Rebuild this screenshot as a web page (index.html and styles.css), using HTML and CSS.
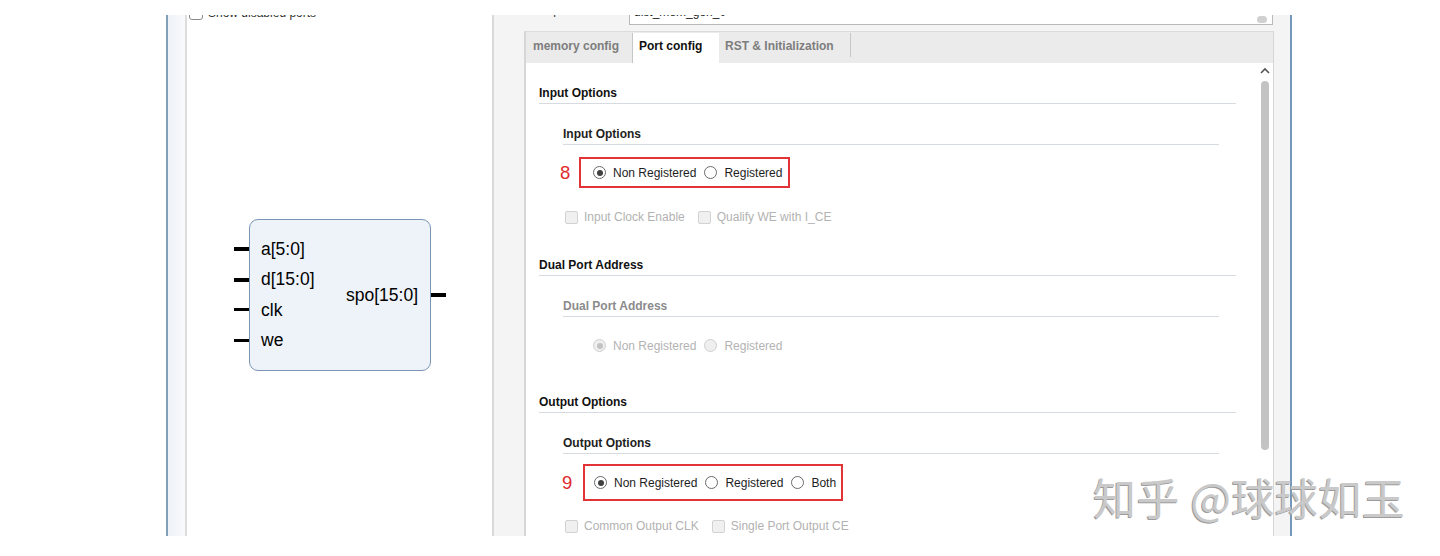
FILE: index.html
```html
<!DOCTYPE html>
<html lang="en">
<head>
<meta charset="utf-8">
<title>Port config</title>
<link rel="stylesheet" href="styles.css">
</head>
<body>
<div class="page">
  <div class="window">
    <div class="strip"></div>
    <div class="left-panel">
      <div class="show-ports"><span class="cb"></span><span class="show-text">Show disabled ports</span></div>
      <div class="symbol">
        <div class="pins-in">
          <div class="pin-row"><span class="pin bus"></span></div>
          <div class="pin-row"><span class="pin bus"></span></div>
          <div class="pin-row"><span class="pin"></span></div>
          <div class="pin-row"><span class="pin"></span></div>
        </div>
        <div class="block">
          <div class="labels-in">
            <div class="port">a[5:0]</div>
            <div class="port">d[15:0]</div>
            <div class="port">clk</div>
            <div class="port">we</div>
          </div>
          <div class="label-out">spo[15:0]</div>
        </div>
        <div class="pins-out"><span class="pin bus"></span></div>
      </div>
    </div>
    <div class="right-pane">
      <div class="name-row">
        <span class="name-label">Component Name</span>
        <div class="combo"><span class="combo-text">dist_mem_gen_0</span><span class="combo-btn"></span></div>
      </div>
      <div class="tabs">
        <div class="tab-bar">
          <div class="tab t1">memory config</div>
          <div class="tab active">Port config</div>
          <div class="tab t3">RST &amp; Initialization</div>
        </div>
        <div class="tab-body">
          <div class="scroll-content">
            <div class="h1 m-a">Input Options</div>
            <div class="group">
              <div class="h2 m-b">Input Options</div>
              <div class="opt-row r8">
                <span class="anno a8">8</span>
                <div class="redbox b8">
                  <span class="radio"><span class="circle on"></span>Non Registered</span>
                  <span class="radio"><span class="circle"></span>Registered</span>
                </div>
              </div>
              <div class="check-row c1">
                <span class="check"><span class="box"></span>Input Clock Enable</span>
                <span class="check"><span class="box"></span>Qualify WE with I_CE</span>
              </div>
            </div>

            <div class="h1 m-c">Dual Port Address</div>
            <div class="group">
              <div class="h2 dim m-b">Dual Port Address</div>
              <div class="radio-row disabled">
                <span class="radio"><span class="circle on"></span>Non Registered</span>
                <span class="radio"><span class="circle"></span>Registered</span>
              </div>
            </div>

            <div class="h1 m-d">Output Options</div>
            <div class="group">
              <div class="h2 m-b">Output Options</div>
              <div class="opt-row r9">
                <span class="anno a9">9</span>
                <div class="redbox b9">
                  <span class="radio"><span class="circle on"></span>Non Registered</span>
                  <span class="radio"><span class="circle"></span>Registered</span>
                  <span class="radio"><span class="circle"></span>Both</span>
                </div>
              </div>
              <div class="check-row c2">
                <span class="check"><span class="box"></span>Common Output CLK</span>
                <span class="check"><span class="box"></span>Single Port Output CE</span>
              </div>
            </div>
          </div>
          <div class="scrollbar">
            <svg class="arrow" width="10" height="7" viewBox="0 0 10 7"><path d="M1 6 L5 2 L9 6" fill="none" stroke="#555" stroke-width="1.6"/></svg>
            <div class="thumb"></div>
          </div>
        </div>
      </div>
    </div>
  </div>
  <div class="watermark">知乎 @球球如玉</div>
</div>
</body>
</html>
```

FILE: styles.css
```css
* { box-sizing: border-box; }
html, body { margin: 0; padding: 0; background: #fff; }
body { font-family: "Liberation Sans", Arial, sans-serif; font-size: 12px; color: #1a1a1a; }

.page {
  position: relative;
  width: 1440px;
  height: 556px;
  padding-top: 15px;
  overflow: hidden;
}

.window {
  margin-left: 166px;
  width: 1126px;
  height: 521px;
  display: flex;
  overflow: hidden;
  border-left: 2px solid #7f9fbb;
  border-right: 2px solid #7598ba;
}

.strip {
  width: 17px;
  flex: none;
  background: linear-gradient(to right, #eef3f8, #f8fafc);
}

.left-panel {
  width: 309px;
  flex: none;
  background: #fff;
  border-left: 2px solid #dddddd;
  border-right: 2px solid #d9d9d9;
}

.show-ports {
  display: flex;
  align-items: center;
  height: 14px;
  margin-top: -9px;
  margin-left: 2px;
}
.show-ports .cb {
  width: 14px;
  height: 14px;
  border: 1px solid #8a8a8a;
  border-radius: 3px;
  background: #fff;
}
.show-text { margin-left: 5px; color: #333; line-height: 14px; }

.symbol {
  display: flex;
  margin-top: 199px;
  margin-left: 47px;
}
.pins-in { width: 15px; padding-top: 15px; }
.pin-row { height: 30.4px; display: flex; align-items: center; }
.pin { display: block; width: 15px; height: 3px; background: #000; }
.pin.bus { height: 4px; }

.block {
  width: 182px;
  height: 152px;
  border: 1px solid #7a95b4;
  border-radius: 9px;
  background: #eef3f9;
  display: flex;
  justify-content: space-between;
}
.labels-in { padding-top: 14px; padding-left: 11px; }
.port, .label-out {
  font-size: 17.5px;
  color: #000;
}
.port { height: 30.4px; line-height: 30.4px; }
.label-out { align-self: center; padding-right: 12px; }
.pins-out { display: flex; align-items: center; }

.right-pane {
  width: 796px;
  flex: none;
  background: #f4f4f4;
  padding-left: 30px;
  padding-right: 16px;
  display: flex;
  flex-direction: column;
}

.name-row {
  height: 16px;
  flex: none;
  display: flex;
}
.name-label {
  width: 105px;
  padding-left: 4px;
  line-height: 16px;
  margin-top: -13px;
  color: #333;
}
.combo {
  flex: 1;
  height: 20px;
  margin-top: -10px;
  margin-right: 1px;
  background: #fff;
  border: 1px solid #b9b9b9;
  display: flex;
  align-items: flex-start;
  padding-left: 4px;
  padding-right: 5px;
}
.combo-text { flex: 1; line-height: 16px; margin-top: -2px; color: #222; }
.combo-btn {
  width: 10px;
  height: 7px;
  margin-top: 10px;
  border-radius: 5px;
  background: #d0d0d0;
}

.tabs {
  flex: 1;
  display: flex;
  flex-direction: column;
  border-left: 2px solid #d6d6d6;
  border-right: 1px solid #d6d6d6;
  border-top: 1px solid #dcdcdc;
}
.tab-bar {
  height: 31px;
  flex: none;
  background: #ebebeb;
  display: flex;
  align-items: flex-start;
  padding-top: 1px;
}
.tab {
  height: 30px;
  line-height: 26px;
  font-weight: bold;
  color: #7d7d7d;
  white-space: nowrap;
}
.tab.t1 { width: 107px; padding-left: 7px; border-right: 1px solid #c6c6c6; }
.tab.active { width: 86px; padding-left: 6px; background: #fff; color: #111; }
.tab.t3 { width: 132px; padding-left: 6px; height: 24px; border-right: 1px solid #c6c6c6; }

.tab-body {
  flex: 1;
  display: flex;
  background: #fff;
}
.scroll-content {
  flex: 1;
  padding: 0 20px 0 13px;
}

.h1, .h2 {
  font-weight: bold;
  line-height: 16px;
  padding-bottom: 2px;
  border-bottom: 1px solid #d5dbe1;
  color: #111;
}
.h2 { color: #1e1e1e; }
.h2.dim { color: #8b8b8b; }
.m-a { margin-top: 22px; }
.m-b { margin-top: 22px; }
.m-c { margin-top: 32px; }
.m-d { margin-top: 33px; }

.group { margin-left: 24px; margin-right: 17px; }

.opt-row { display: flex; align-items: center; }
.r8 { margin-top: 12px; }
.r9 { margin-top: 10px; }
.anno {
  font-size: 18.5px;
  color: #e0292d;
  width: 10px;
  line-height: 20px;
}
.a8 { margin-left: -3px; }
.a9 { margin-left: -1px; }
.redbox {
  display: flex;
  align-items: center;
  border: 2px solid #e23437;
  padding-right: 6px;
}
.b8 { height: 31px; margin-left: 9px; padding-left: 12px; width: 211px; }
.b9 { height: 37px; margin-left: 11px; padding-left: 9px; width: 260px; }

.radio {
  display: inline-flex;
  align-items: center;
  margin-right: 8px;
  color: #1e1e1e;
  white-space: nowrap;
}
.radio:last-child { margin-right: 0; }
.circle {
  width: 13px;
  height: 13px;
  border: 1px solid #6a6a6a;
  border-radius: 50%;
  background: #fff;
  margin-right: 7px;
  display: flex;
  align-items: center;
  justify-content: center;
}
.circle.on::after {
  content: "";
  width: 6px;
  height: 6px;
  border-radius: 50%;
  background: #404040;
}

.radio-row {
  display: flex;
  align-items: center;
  height: 31px;
  margin-top: 13px;
  padding-left: 30px;
}
.disabled .radio { color: #b3b3b3; }
.disabled .circle { border-color: #cfcfcf; background: #efefef; }
.disabled .circle.on::after { background: #c2c2c2; }

.check-row {
  display: flex;
  align-items: center;
  height: 16px;
  padding-left: 2px;
}
.c1 { margin-top: 21px; }
.c2 { margin-top: 17px; }
.check {
  display: inline-flex;
  align-items: center;
  color: #b2b2b2;
  margin-right: 13px;
  white-space: nowrap;
}
.check .box {
  width: 13px;
  height: 13px;
  border: 1px solid #d2d2d2;
  border-radius: 2px;
  background: #f0f0f0;
  margin-right: 6px;
}

.scrollbar {
  width: 17px;
  flex: none;
  display: flex;
  flex-direction: column;
  align-items: center;
  padding-top: 4px;
}
.arrow { display: block; }
.thumb {
  margin-top: 7px;
  width: 8px;
  height: 369px;
  border-radius: 4px;
  background: #c3c3c3;
}

.watermark {
  position: absolute;
  left: 1093px;
  top: 475px;
  font-family: "Noto Sans CJK SC", sans-serif;
  font-size: 43px;
  line-height: 43px;
  letter-spacing: 0.5px;
  color: #c9c9c9;
  text-shadow: -1px 1px 0 #9c9c9c;
  white-space: nowrap;
}
```
